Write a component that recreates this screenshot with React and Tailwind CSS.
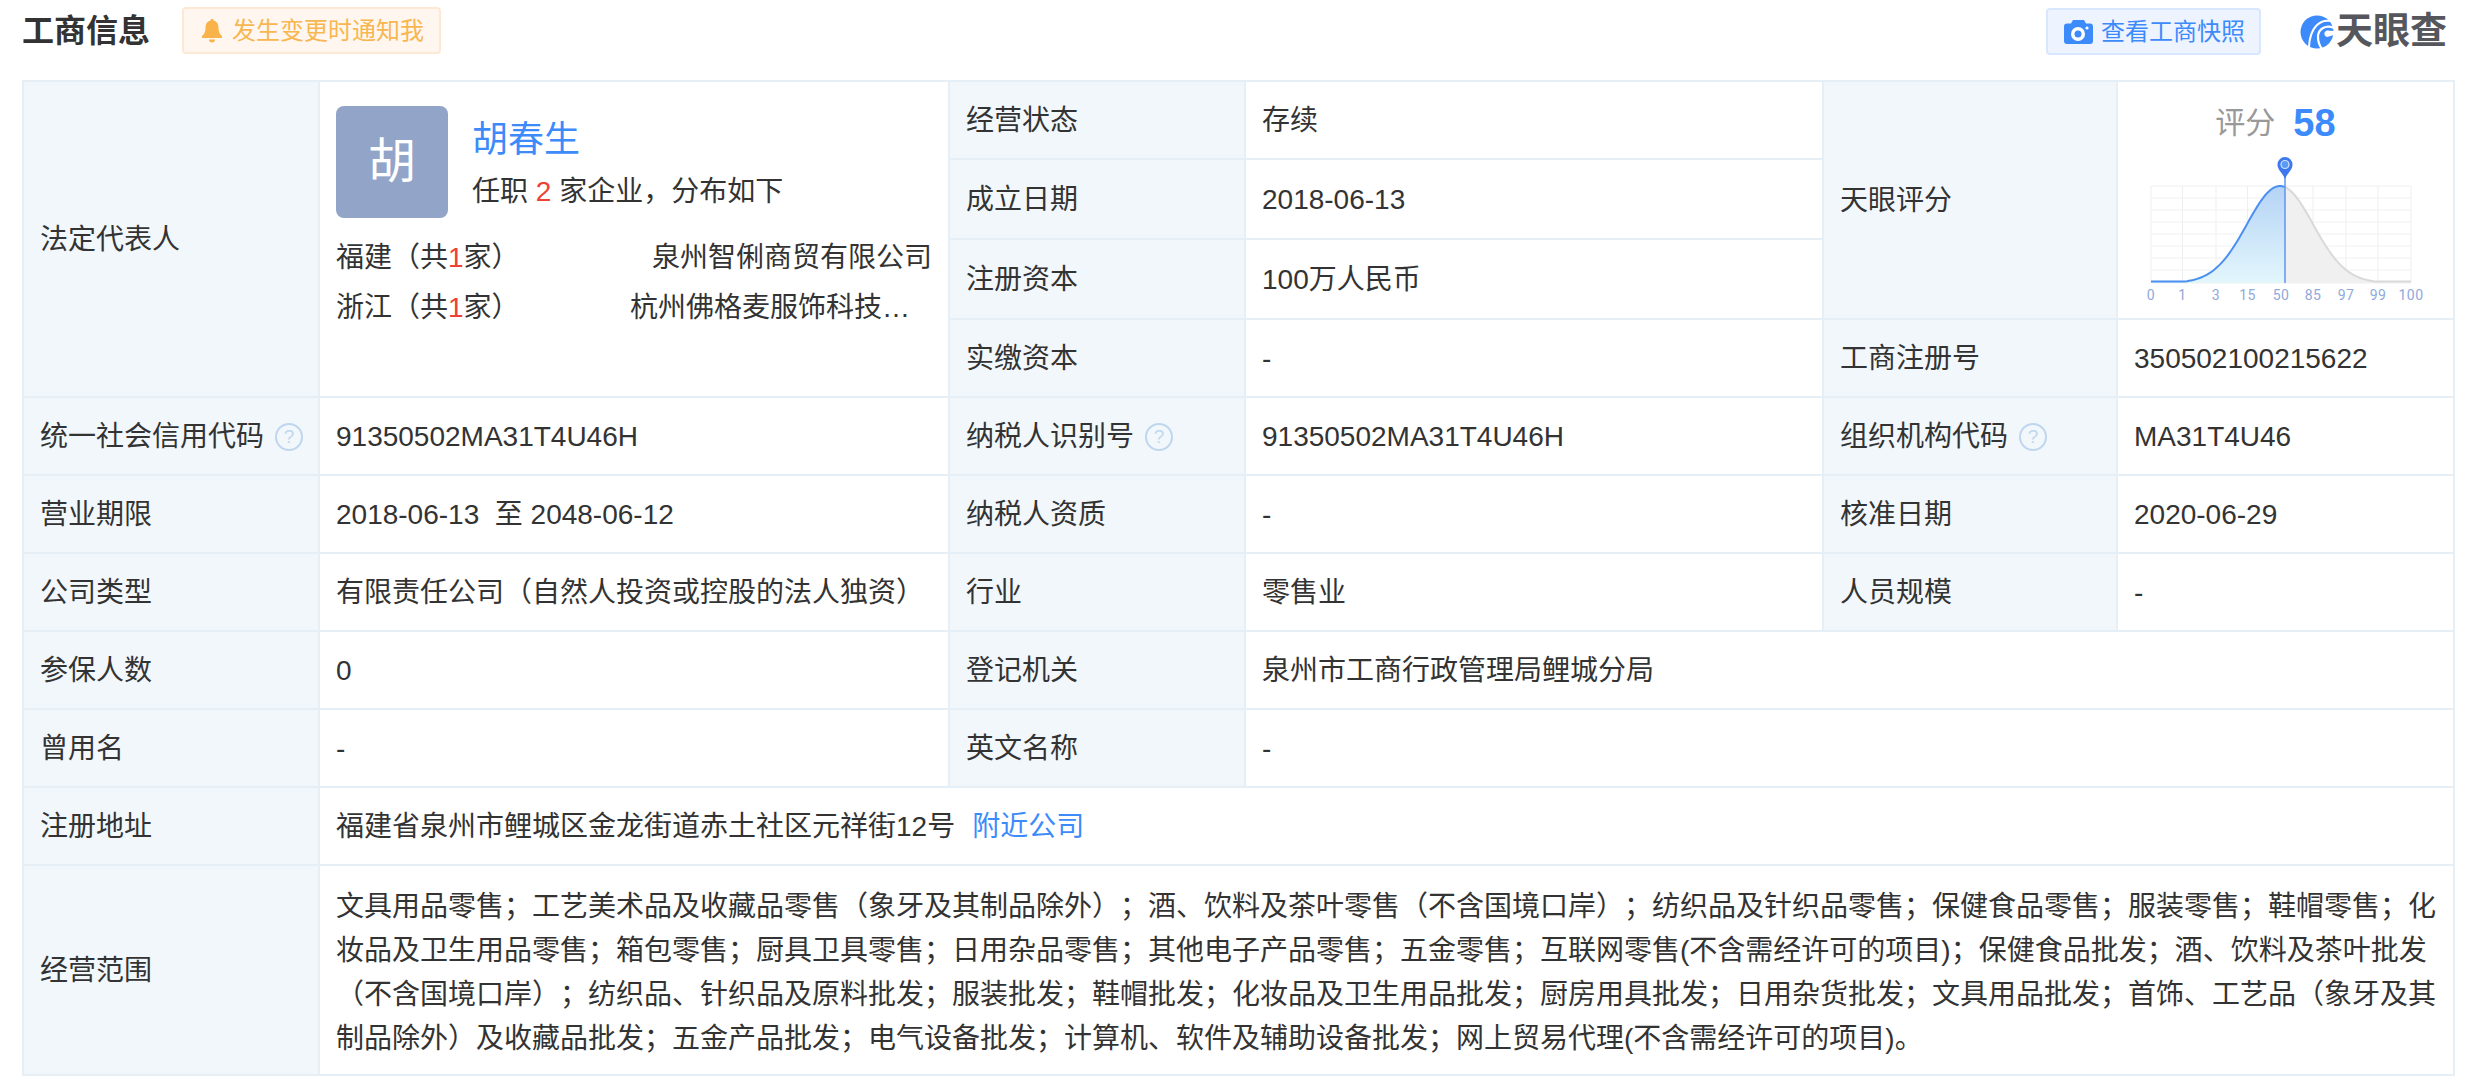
import React from "react";

const font = "font-['Liberation_Sans','Noto_Sans_CJK_SC',sans-serif]";
const labelCell = "border-2 border-[#e6eef6] bg-[#f2f7fb] px-[16px] pb-0 pt-[2px] text-left font-normal align-middle whitespace-nowrap";
const valueCell = "border-2 border-[#e6eef6] bg-white px-[16px] pb-0 pt-[2px] text-left font-normal align-middle";

const Help = () => (
    <span className="ml-[11px] inline-flex h-[28px] w-[28px] items-center justify-center rounded-full border-2 border-[#bfd7ee] align-[3px] text-[19px] leading-none text-[#bfd7ee]">?</span>
);

const Label = ({ children, help, ...rest }) => (
    <td className={labelCell} {...rest}>
        {children}
        {help && <Help />}
    </td>
);

const Value = ({ children, ...rest }) => (
    <td className={valueCell} {...rest}>{children}</td>
);

// bell curve of the score chart, in svg coordinates
const curve = (from, to) => {
    const pts = [];
    for (let x = from; x <= to; x += 2) {
        const y = 132 - 97 * Math.exp(-Math.pow((x - 155) / 33, 2) / 2);
        pts.push(`${x} ${Math.min(y, 130.5).toFixed(1)}`);
    }
    pts.push(`${to} ${Math.min(132 - 97 * Math.exp(-Math.pow((to - 155) / 33, 2) / 2), 130.5).toFixed(1)}`);
    return pts;
};

const ScoreChart = () => {
    const xs = [26, 57.5, 91, 122.5, 156, 188, 221, 253, 286];
    const labels = ["0", "1", "3", "15", "50", "85", "97", "99", "100"];
    const ys = [35, 47, 59, 71, 83, 95, 107, 119, 132];
    const left = curve(26, 160);
    const right = curve(160, 286);
    return (
        <svg width="320" height="160" viewBox="0 0 320 160" className="mr-[2px] block">
            <defs>
                <linearGradient id="scoreFill" x1="0" y1="0" x2="0" y2="1">
                    <stop offset="0" stopColor="#b4d3f5" />
                    <stop offset="1" stopColor="#e3f6fc" />
                </linearGradient>
            </defs>
            {ys.map((y) => <line key={y} x1="26" x2="286" y1={y} y2={y} stroke="#f0f0f2" strokeWidth="1" />)}
            {xs.map((x) => <line key={x} x1={x} x2={x} y1="35" y2="132" stroke="#efeff1" strokeWidth="1" />)}
            <path d={`M26 132 L${left.join(" L")} L160 132 Z`} fill="url(#scoreFill)" />
            <path d={`M160 132 L${right.join(" L")} L286 132 Z`} fill="#f0f0f0" />
            <path d={`M${right.join(" L")}`} fill="none" stroke="#d9d9d9" strokeWidth="2" />
            <path d={`M${left.join(" L")}`} fill="none" stroke="#4a8ff2" strokeWidth="2" />
            <line x1="160" x2="160" y1="26" y2="132" stroke="#5f95f2" strokeWidth="1.5" />
            <path d="M160 28 C157 21 152.500 19 152.500 13.500 A7.500 7.500 0 0 1 167.500 13.500 C167.500 19 163 21 160 28 Z" fill="#3f78ee" />
            <circle cx="160" cy="13.500" r="4" fill="#5b9bf5" stroke="#cfe2fb" strokeWidth="1.200" />
            {labels.map((t, i) => (
                <text key={t} x={xs[i]} y="149" textAnchor="middle" fontSize="14" letterSpacing="0.5" fill="#8fa9da" fontFamily="Roboto, sans-serif">{t}</text>
            ))}
        </svg>
    );
};

const Logo = () => (
    <div className="flex items-center">
        <svg width="34" height="34" viewBox="0 0 34 34" className="block shrink-0">
            <circle cx="17" cy="17" r="16.500" fill="#3d8bfb" />
            <path d="M31 6 C20 4 10 12 9 32" fill="none" stroke="#fff" strokeWidth="2" />
            <path d="M34 13 C26 9 18 14 18 22 C18 26 19 30 22 34" fill="none" stroke="#fff" strokeWidth="2.200" />
            <path d="M34 16 L27 15.500 C23.500 16.500 23.500 21 27 22 L34 20 Z" fill="#fff" />
        </svg>
        <span className="ml-[2px] text-[37px] font-bold leading-none text-[#55575c]">天眼查</span>
    </div>
);

const App = () => {
    return (
        <div className={`${font} min-h-[1090px] w-full bg-white px-[22px] text-[28px] leading-[44px] text-[#333] [text-spacing-trim:space-all]`}>
            <div className="flex h-[80px] items-start justify-between pt-[6px]">
                <div className="flex items-center">
                    <h2 className="pt-[2px] text-[32px] font-bold leading-[47px] text-[#333]">工商信息</h2>
                    <div className="ml-[32px] flex h-[47px] w-[259px] items-center rounded-[4px] border-2 border-[#fde9d3] bg-[#fff7ef] pl-[18px] text-[24px] leading-none text-[#f8b650]">
                        <svg width="20" height="24" viewBox="0 0 20 24" className="mr-[10px] block shrink-0" fill="#f8b34a">
                            <path d="M10 0c1 0 1.600.6 1.600 1.500 3.400.8 4.900 3.500 4.900 7 0 4 1 6.500 3.500 8.500v2H0v-2c2.500-2 3.500-4.500 3.500-8.500 0-3.500 1.500-6.200 4.900-7C8.400.6 9 0 10 0z" />
                            <path d="M7 20.500h6a3 3 0 0 1-6 0z" />
                        </svg>
                        发生变更时通知我
                    </div>
                </div>
                <div className="flex items-center pt-[2px]">
                    <div className="flex h-[47px] w-[215px] items-center rounded-[4px] border-2 border-[#d8e7fd] bg-[#edf4ff] pl-[16px] text-[24px] leading-none text-[#3d8bfb]">
                        <svg width="29" height="24" viewBox="0 0 29 24" className="mr-[8px] block shrink-0">
                            <path fill="#3d8bfb" d="M9 0h11l2 3.500h4a3 3 0 0 1 3 3V21a3 3 0 0 1-3 3H3a3 3 0 0 1-3-3V6.500a3 3 0 0 1 3-3h4z" />
                            <circle cx="14" cy="14" r="7" fill="#fff" />
                            <circle cx="14" cy="14" r="3.500" fill="#3d8bfb" />
                            <circle cx="23" cy="8" r="1.600" fill="#fff" />
                        </svg>
                        查看工商快照
                    </div>
                    <div className="ml-[39px] mr-[9px]"><Logo /></div>
                </div>
            </div>

            <table className="w-[2431px] table-fixed border-collapse">
                <colgroup>
                    <col className="w-[296px]" />
                    <col className="w-[630px]" />
                    <col className="w-[296px]" />
                    <col className="w-[578px]" />
                    <col className="w-[294px]" />
                    <col className="w-[337px]" />
                </colgroup>
                <tbody>
                    <tr className="h-[78px]">
                        <Label rowSpan={4}>法定代表人</Label>
                        <td rowSpan={4} className={`${valueCell} !pt-0 align-top`}>
                            <div className="pt-[24px]">
                                <div className="flex items-start">
                                    <div className="flex h-[112px] w-[112px] shrink-0 items-center justify-center rounded-[8px] bg-[#92a5c9] text-[48px] leading-none text-white">胡</div>
                                    <div className="ml-[24px] pt-[11px]">
                                        <div className="text-[36px] leading-[46px] text-[#3d8bfb]">胡春生</div>
                                        <div className="mt-[7px] leading-[44px]">任职 <span className="text-[#ef4136]">2</span> 家企业，分布如下</div>
                                    </div>
                                </div>
                                <div className="mt-[15px]">
                                    <div className="flex h-[50px] items-center justify-between">
                                        <span>福建（共<span className="text-[#ef4136]">1</span>家）</span>
                                        <span>泉州智俐商贸有限公司</span>
                                    </div>
                                    <div className="flex h-[50px] items-center justify-between">
                                        <span>浙江（共<span className="text-[#ef4136]">1</span>家）</span>
                                        <span className="max-w-[302px] truncate">杭州佛格麦服饰科技有限公司</span>
                                    </div>
                                </div>
                            </div>
                        </td>
                        <Label>经营状态</Label>
                        <Value>存续</Value>
                        <Label rowSpan={3}>天眼评分</Label>
                        <td rowSpan={3} className={`${valueCell} !px-0 !pt-0 align-top`}>
                            <div className="flex flex-col items-center">
                                <div className="mb-[6px] mr-[20px] mt-[19px] flex h-[44px] items-center">
                                    <span className="text-[30px] text-[#999]">评分</span>
                                    <span className="ml-[18px] text-[38px] font-bold text-[#3d8bfb]">58</span>
                                </div>
                                <ScoreChart />
                            </div>
                        </td>
                    </tr>
                    <tr className="h-[80px]">
                        <Label>成立日期</Label>
                        <Value>2018-06-13</Value>
                    </tr>
                    <tr className="h-[80px]">
                        <Label>注册资本</Label>
                        <Value>100万人民币</Value>
                    </tr>
                    <tr className="h-[78px]">
                        <Label>实缴资本</Label>
                        <Value>-</Value>
                        <Label>工商注册号</Label>
                        <Value>350502100215622</Value>
                    </tr>
                    <tr className="h-[78px]">
                        <Label help>统一社会信用代码</Label>
                        <Value>91350502MA31T4U46H</Value>
                        <Label help>纳税人识别号</Label>
                        <Value>91350502MA31T4U46H</Value>
                        <Label help>组织机构代码</Label>
                        <Value>MA31T4U46</Value>
                    </tr>
                    <tr className="h-[78px]">
                        <Label>营业期限</Label>
                        <Value>2018-06-13&nbsp;&nbsp;至&nbsp;2048-06-12</Value>
                        <Label>纳税人资质</Label>
                        <Value>-</Value>
                        <Label>核准日期</Label>
                        <Value>2020-06-29</Value>
                    </tr>
                    <tr className="h-[78px]">
                        <Label>公司类型</Label>
                        <Value>有限责任公司（自然人投资或控股的法人独资）</Value>
                        <Label>行业</Label>
                        <Value>零售业</Value>
                        <Label>人员规模</Label>
                        <Value>-</Value>
                    </tr>
                    <tr className="h-[78px]">
                        <Label>参保人数</Label>
                        <Value>0</Value>
                        <Label>登记机关</Label>
                        <Value colSpan={3}>泉州市工商行政管理局鲤城分局</Value>
                    </tr>
                    <tr className="h-[78px]">
                        <Label>曾用名</Label>
                        <Value>-</Value>
                        <Label>英文名称</Label>
                        <Value colSpan={3}>-</Value>
                    </tr>
                    <tr className="h-[78px]">
                        <Label>注册地址</Label>
                        <Value colSpan={5}>福建省泉州市鲤城区金龙街道赤土社区元祥街12号<span className="ml-[17px] text-[#3d8bfb]">附近公司</span></Value>
                    </tr>
                    <tr className="h-[210px]">
                        <Label>经营范围</Label>
                        <td colSpan={5} className={`${valueCell} !pt-[6px]`}>文具用品零售；工艺美术品及收藏品零售（象牙及其制品除外）；酒、饮料及茶叶零售（不含国境口岸）；纺织品及针织品零售；保健食品零售；服装零售；鞋帽零售；化妆品及卫生用品零售；箱包零售；厨具卫具零售；日用杂品零售；其他电子产品零售；五金零售；互联网零售(不含需经许可的项目)；保健食品批发；酒、饮料及茶叶批发（不含国境口岸）；纺织品、针织品及原料批发；服装批发；鞋帽批发；化妆品及卫生用品批发；厨房用具批发；日用杂货批发；文具用品批发；首饰、工艺品（象牙及其制品除外）及收藏品批发；五金产品批发；电气设备批发；计算机、软件及辅助设备批发；网上贸易代理(不含需经许可的项目)。</td>
                    </tr>
                </tbody>
            </table>
        </div>
    );
};

export default App;
